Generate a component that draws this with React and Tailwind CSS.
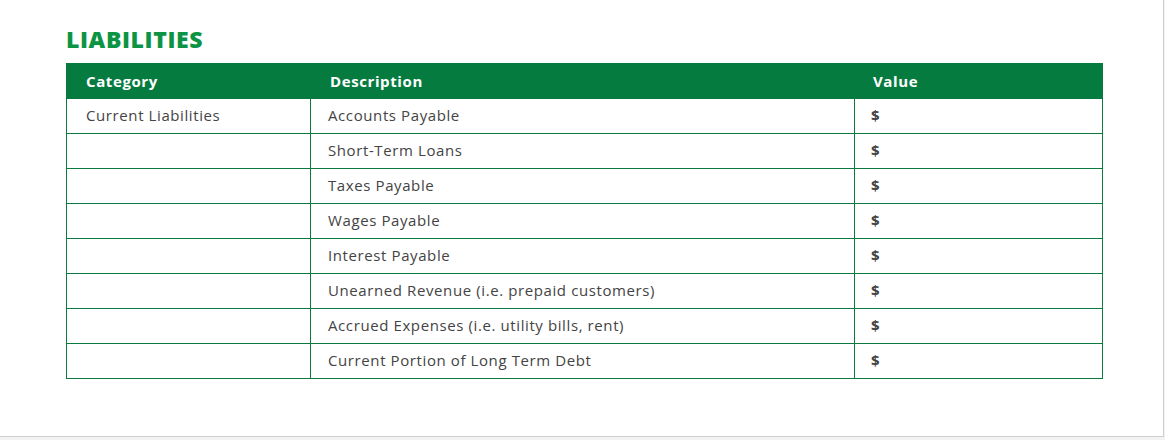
const rows = [
  ['Current Liabilities', 'Accounts Payable'],
  ['', 'Short-Term Loans'],
  ['', 'Taxes Payable'],
  ['', 'Wages Payable'],
  ['', 'Interest Payable'],
  ['', 'Unearned Revenue (i.e. prepaid customers)'],
  ['', 'Accrued Expenses (i.e. utility bills, rent)'],
  ['', 'Current Portion of Long Term Debt'],
];

export default function App() {
  return (
    <div className="h-[440px] bg-[#f3f3f3]" style={{ fontFamily: '"Open Sans", "Noto Sans", sans-serif' }}>
      <div className="w-[1164px] h-[437px] bg-white border-r border-b border-[#cfcfcf] pl-[66px] pt-[25px]">
        <h2 className="text-[23px] leading-[28px] font-extrabold text-[#0b9444] tracking-[0.6px] mb-[10px]">
          LIABILITIES
        </h2>
        <table className="w-[1037px] border-collapse text-[15px] text-[#444] tracking-[0.6px]">
          <thead>
            <tr className="bg-[#057b3f] text-white h-[35px]">
              <th className="w-[244px] text-left font-bold pl-[19px] border border-[#057b3f]">Category</th>
              <th className="w-[544px] text-left font-bold pl-[19px] border border-[#057b3f]">Description</th>
              <th className="text-left font-bold pl-[18px] border border-[#057b3f]">Value</th>
            </tr>
          </thead>
          <tbody>
            {rows.map(([cat, desc], i) => (
              <tr key={i} className="h-[35px]">
                <td className="pl-[19px] pb-px border border-[#0b7a40]">{cat}</td>
                <td className="pl-[17px] pb-px border border-[#0b7a40]">{desc}</td>
                <td className="pl-[16px] pb-px border border-[#0b7a40] font-bold">$</td>
              </tr>
            ))}
          </tbody>
        </table>
      </div>
    </div>
  );
}
